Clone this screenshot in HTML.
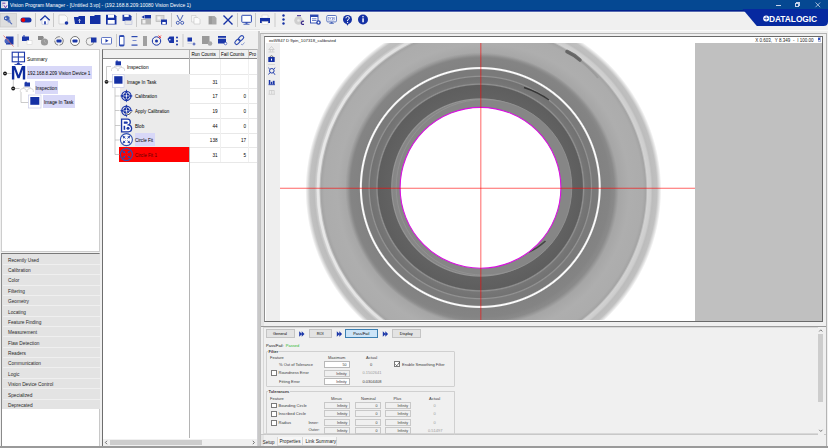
<!DOCTYPE html>
<html><head><meta charset="utf-8">
<style>
*{margin:0;padding:0;box-sizing:border-box}
html,body{width:828px;height:448px;overflow:hidden;background:#f0f0f0;font-family:"Liberation Sans",sans-serif;color:#000}
.a{position:absolute}
.t{position:absolute;white-space:nowrap;line-height:1}
.cat{position:absolute;left:3px;width:96px;height:10px;background:#e3e3e3;border-bottom:0.5px solid #f4f4f4}
.cat span{position:absolute;left:5px;top:4.3px;color:#1a1a1a;font-size:4.75px;white-space:nowrap;line-height:1}
.rc{position:absolute;font-size:4.6px;line-height:1;text-align:right;white-space:nowrap}
.s4{font-size:4px;color:#3a3a3a;margin-top:0.6px}
.inp{position:absolute;height:7px;width:26px;border:0.6px solid #b8b8b8;background:#fff;color:#3a3a3a;font-size:3.6px;text-align:right;padding-right:2px;line-height:6px;white-space:nowrap}
.inp.g{background:#f0f0f0;border-color:#c8c8c8}
.cb{position:absolute;width:5.5px;height:5.5px;border:0.5px solid #7a7a7a;background:#fff}
.btn{position:absolute;top:329px;height:8.5px;background:#e3e3e3;border:0.6px solid #c4c4c4;font-size:3.9px;text-align:center;line-height:7.5px;white-space:nowrap}
</style></head><body>
<div class="a" style="left:0;top:0;width:828px;height:448px;overflow:hidden">

<!-- title bar -->
<svg class="a" style="left:0;top:0" width="828" height="14" viewBox="0 0 828 14"><rect x="0" y="0" width="828" height="10" fill="#054892"/><rect x="0" y="10" width="828" height="1.8" fill="#02208c"/><rect x="0" y="11.8" width="828" height="1" fill="#f6f6f4"/></svg>
<svg class="a" style="left:0;top:0" width="10" height="10" viewBox="0 0 10 10"><rect x="1.1" y="1.2" width="6.9" height="7" fill="#eeeaf0"/><rect x="2.2" y="2.6" width="3.2" height="1.2" fill="#7a5ab8"/><rect x="2.2" y="3.8" width="1" height="3.5" fill="#c8c8d0"/><path d="M4 5.3 L5.5 7.8 L7 5.3" stroke="#6a3ab0" stroke-width="1" fill="none"/></svg>
<div class="t" style="left:10px;top:3px;font-size:5px;color:#fff">Vision Program Manager - [Untitled 3.vp] - (192.168.8.209:10080 Vision Device 1)</div>
<div class="a" style="left:776px;top:4.5px;width:5px;height:0.8px;background:#c8d4ea"></div>
<div class="a" style="left:795px;top:3.3px;width:3.6px;height:3.6px;border:0.7px solid #c8d4ea"></div><div class="a" style="left:796.3px;top:2.2px;width:3.6px;height:3.6px;border-top:0.7px solid #c8d4ea;border-right:0.7px solid #c8d4ea"></div>
<svg class="a" style="left:814px;top:1px" width="8" height="8" viewBox="0 0 8 8"><path d="M1.5 1.5 L6.2 6.2 M6.2 1.5 L1.5 6.2" stroke="#dde5f3" stroke-width="0.7"/></svg>

<!-- datalogic logo -->
<svg class="a" style="left:740px;top:9px" width="88" height="18" viewBox="0 0 88 18">
<path d="M2.5 0 L88 0 L88 12.5 Q88 17 83.5 17 L16.8 17 Z" fill="#0629a0"/>
<circle cx="26.2" cy="9.4" r="3" fill="#fff"/><path d="M26.2 7.4 L26.2 11.4 M24.2 9.4 L28.2 9.4" stroke="#0629a0" stroke-width="0.7"/>
</svg>
<div class="t" style="left:769px;top:14.5px;font-size:8.4px;font-weight:bold;color:#fff;letter-spacing:-0.05px">DATALOGIC</div>
<!-- toolbar 2 line -->
<div class="a" style="left:0;top:29px;width:260px;height:1px;background:#e4e4e4"></div>

<!-- left panel tree -->
<div class="a" style="left:1px;top:49px;width:99px;height:202.5px;background:#fff;border:1px solid #cdcdcd"></div>
<div class="a" style="left:27px;top:66px;width:65px;height:13px;background:#d8d8f8"></div>
<div class="a" style="left:35px;top:81px;width:23px;height:13px;background:#d8d8f8"></div>
<div class="a" style="left:43px;top:95px;width:32px;height:13px;background:#d8d8f8"></div>
<div class="t" style="left:27px;top:57.5px;font-size:4.75px">Summary</div>
<div class="t" style="left:27.5px;top:72px;font-size:4.65px">192.168.8.209 Vision Device 1</div>
<div class="t" style="left:35.5px;top:86.5px;font-size:4.75px">Inspection</div>
<div class="t" style="left:44px;top:101px;font-size:4.75px">Image In Task</div>

<!-- categories -->
<div class="a" style="left:1px;top:252.5px;width:99px;height:194px;background:#fff;border:1px solid #c8c8c8;border-top-color:#787878;border-left-color:#8a8a8a"></div>
<div class="a" style="left:2px;top:253.5px;width:97.5px;height:155px;background:#e3e3e3"></div>
<div class="t" style="left:8px;top:258.70px;font-size:4.75px;color:#2a2a2a">Recently Used</div>
<div class="a" style="left:2.5px;top:263.77px;width:97px;height:1px;background:#efefef"></div>
<div class="t" style="left:8px;top:269.07px;font-size:4.75px;color:#2a2a2a">Calibration</div>
<div class="a" style="left:2.5px;top:274.14px;width:97px;height:1px;background:#efefef"></div>
<div class="t" style="left:8px;top:279.44px;font-size:4.75px;color:#2a2a2a">Color</div>
<div class="a" style="left:2.5px;top:284.51px;width:97px;height:1px;background:#efefef"></div>
<div class="t" style="left:8px;top:289.81px;font-size:4.75px;color:#2a2a2a">Filtering</div>
<div class="a" style="left:2.5px;top:294.88px;width:97px;height:1px;background:#efefef"></div>
<div class="t" style="left:8px;top:300.18px;font-size:4.75px;color:#2a2a2a">Geometry</div>
<div class="a" style="left:2.5px;top:305.25px;width:97px;height:1px;background:#efefef"></div>
<div class="t" style="left:8px;top:310.55px;font-size:4.75px;color:#2a2a2a">Locating</div>
<div class="a" style="left:2.5px;top:315.62px;width:97px;height:1px;background:#efefef"></div>
<div class="t" style="left:8px;top:320.92px;font-size:4.75px;color:#2a2a2a">Feature Finding</div>
<div class="a" style="left:2.5px;top:325.99px;width:97px;height:1px;background:#efefef"></div>
<div class="t" style="left:8px;top:331.29px;font-size:4.75px;color:#2a2a2a">Measurement</div>
<div class="a" style="left:2.5px;top:336.36px;width:97px;height:1px;background:#efefef"></div>
<div class="t" style="left:8px;top:341.66px;font-size:4.75px;color:#2a2a2a">Flaw Detection</div>
<div class="a" style="left:2.5px;top:346.73px;width:97px;height:1px;background:#efefef"></div>
<div class="t" style="left:8px;top:352.03px;font-size:4.75px;color:#2a2a2a">Readers</div>
<div class="a" style="left:2.5px;top:357.10px;width:97px;height:1px;background:#efefef"></div>
<div class="t" style="left:8px;top:362.40px;font-size:4.75px;color:#2a2a2a">Communication</div>
<div class="a" style="left:2.5px;top:367.47px;width:97px;height:1px;background:#efefef"></div>
<div class="t" style="left:8px;top:372.77px;font-size:4.75px;color:#2a2a2a">Logic</div>
<div class="a" style="left:2.5px;top:377.84px;width:97px;height:1px;background:#efefef"></div>
<div class="t" style="left:8px;top:383.14px;font-size:4.75px;color:#2a2a2a">Vision Device Control</div>
<div class="a" style="left:2.5px;top:388.21px;width:97px;height:1px;background:#efefef"></div>
<div class="t" style="left:8px;top:393.51px;font-size:4.75px;color:#2a2a2a">Specialized</div>
<div class="a" style="left:2.5px;top:398.58px;width:97px;height:1px;background:#efefef"></div>
<div class="t" style="left:8px;top:403.88px;font-size:4.75px;color:#2a2a2a">Deprecated</div>
<!-- middle panel -->
<div class="a" style="left:102px;top:49px;width:156px;height:398px;background:#fff;border:1px solid #d0d0d4;border-left-color:#6e6e6e;border-top-color:#b0b0b0"></div>
<div class="a" style="left:103px;top:50px;width:154px;height:8.5px;background:#f0f0f0;border-bottom:1.5px solid #8a8a8a"></div>
<div class="a" style="left:189.3px;top:50px;width:0.8px;height:388px;background:#b4b4b4"></div>
<div class="a" style="left:219.3px;top:50px;width:0.6px;height:8px;background:#c8c8c8"></div>
<div class="a" style="left:247.5px;top:50px;width:0.6px;height:8px;background:#c8c8c8"></div>
<div class="t" style="left:191.5px;top:52.5px;font-size:4.6px">Run Counts</div>
<div class="t" style="left:221px;top:52.5px;font-size:4.6px">Fail Counts</div>
<div class="t" style="left:249px;top:52.5px;font-size:4.6px">Pro</div>
<!-- row bgs -->
<div class="a" style="left:112px;top:73.7px;width:77.5px;height:14.7px;background:#ebebeb"></div>
<div class="a" style="left:119.5px;top:88.4px;width:70px;height:58.8px;background:#ebebeb"></div>
<div class="a" style="left:119.4px;top:147.4px;width:69.6px;height:14.3px;background:#ff0000"></div>
<div class="a" style="left:134.5px;top:132.8px;width:20px;height:13.5px;background:#d8d8f8"></div>
<div class="a" style="left:190px;top:73.7px;width:67px;height:0.5px;background:#e8e8e8"></div>
<div class="a" style="left:190px;top:88.4px;width:67px;height:0.5px;background:#e8e8e8"></div>
<div class="a" style="left:190px;top:103.1px;width:67px;height:0.5px;background:#e8e8e8"></div>
<div class="a" style="left:190px;top:117.8px;width:67px;height:0.5px;background:#e8e8e8"></div>
<div class="a" style="left:190px;top:132.5px;width:67px;height:0.5px;background:#e8e8e8"></div>
<div class="a" style="left:190px;top:147.2px;width:67px;height:0.5px;background:#e8e8e8"></div>
<div class="a" style="left:190px;top:161.9px;width:67px;height:0.5px;background:#e8e8e8"></div>
<div class="a" style="left:219.5px;top:59px;width:0.5px;height:103px;background:#f0f0f0"></div>
<div class="a" style="left:247.5px;top:59px;width:0.5px;height:103px;background:#f0f0f0"></div>
<div class="t" style="left:127px;top:65.5px;font-size:4.75px">Inspection</div>
<div class="t" style="left:127px;top:80.5px;font-size:4.75px">Image In Task</div>
<div class="t" style="left:135px;top:95px;font-size:4.6px">Calibration</div>
<div class="t" style="left:135px;top:109.8px;font-size:4.55px">Apply Calibration</div>
<div class="t" style="left:135px;top:124.5px;font-size:4.6px">Blob</div>
<div class="t" style="left:135px;top:139.2px;font-size:4.6px">Circle Fit</div>
<div class="t" style="left:135px;top:154px;font-size:4.6px;color:#600000">Circle Fit 1</div>
<div class="rc" style="right:610.5px;top:80.5px">31</div>
<div class="rc" style="right:610.5px;top:95px">17</div>
<div class="rc" style="right:610.5px;top:109.8px">19</div>
<div class="rc" style="right:610.5px;top:124.5px">44</div>
<div class="rc" style="right:610.5px;top:139.2px">138</div>
<div class="rc" style="right:610.5px;top:154px">31</div>
<div class="rc" style="right:582px;top:95px">0</div>
<div class="rc" style="right:582px;top:109.8px">0</div>
<div class="rc" style="right:582px;top:124.5px">0</div>
<div class="rc" style="right:582px;top:139.2px">17</div>
<div class="rc" style="right:582px;top:154px">5</div>
<!-- h scrollbar -->
<div class="a" style="left:103px;top:438.5px;width:154px;height:7.5px;background:#f0f0f0"></div>
<div class="a" style="left:109.5px;top:439.5px;width:92px;height:5.5px;background:#cdcdcd"></div>
<svg class="a" style="left:103px;top:439px" width="6" height="7" viewBox="0 0 6 7"><path d="M4 1.8 L2.4 3.5 L4 5.2" stroke="#505050" stroke-width="0.8" fill="none"/></svg>
<svg class="a" style="left:251px;top:439px" width="6" height="7" viewBox="0 0 6 7"><path d="M1.8 1.8 L3.4 3.5 L1.8 5.2" stroke="#505050" stroke-width="0.8" fill="none"/></svg>

<!-- separator -->
<div class="a" style="left:0;top:29.5px;width:828px;height:0.8px;background:#fafafa"></div><div class="a" style="left:258px;top:31px;width:1.5px;height:416px;background:#c8c8c8"></div><div class="a" style="left:259.5px;top:31px;width:0.8px;height:416px;background:#f8f8f8"></div>

<!-- right area -->
<div class="a" style="left:260px;top:33px;width:567px;height:414px;border:1px solid #b4b4b4;border-left-color:#c0c0c0;background:#f0f0f0"></div><div class="a" style="left:261px;top:34px;width:2.7px;height:412px;background:#e4e4e4"></div>
<div class="a" style="left:264px;top:36px;width:559px;height:286px;border:1px solid #6a6a6a;border-left-color:#909090;background:#fff"></div>

<div class="t" style="left:269px;top:38.5px;font-size:4.28px;color:#222">eoW847 D 9pin_107318_calibrated</div>
<div class="t" style="left:755.2px;top:38.6px;font-size:4.5px;color:#222;word-spacing:0.1px">X 0.603, &nbsp;Y 8.349 &nbsp;- &nbsp;I 100.00</div>
<div class="a" style="left:817.5px;top:37.3px;width:3.6px;height:4.6px;background:#e8ecf8;border:0.5px solid #b0b8d8"></div><div class="a" style="left:818.4px;top:38.2px;width:1.8px;height:2.2px;background:#3050c0"></div>
<div class="a" style="left:266px;top:43px;width:14px;height:278px;background:#eeeeee"></div>
<div class="a" style="left:695px;top:43px;width:127px;height:278px;background:#c0c0c0"></div>

<!-- image -->
<svg class="a" style="left:280px;top:43px" width="415" height="277" viewBox="280 43 415 277">
<defs>
<radialGradient id="rgo" gradientUnits="userSpaceOnUse" cx="483.4" cy="190" r="178">
<stop offset="0.685" stop-color="#868686"/>
<stop offset="0.735" stop-color="#8a8a8a"/>
<stop offset="0.76" stop-color="#a6a6a6"/>
<stop offset="0.82" stop-color="#aeaeae"/>
<stop offset="0.895" stop-color="#acacac"/>
<stop offset="0.912" stop-color="#a4a4a4"/>
<stop offset="0.922" stop-color="#d2d2d2"/>
<stop offset="0.94" stop-color="#cdcdcd"/>
<stop offset="0.95" stop-color="#bcbcbc"/>
<stop offset="0.975" stop-color="#c0c0c0"/>
<stop offset="0.993" stop-color="#ececec"/>
<stop offset="1" stop-color="#ffffff"/>
</radialGradient>
<linearGradient id="hl" gradientUnits="userSpaceOnUse" x1="305" y1="0" x2="560" y2="0">
<stop offset="0" stop-color="#fff" stop-opacity="0.55"/>
<stop offset="1" stop-color="#fff" stop-opacity="0"/>
</linearGradient>
<radialGradient id="rgi" gradientUnits="userSpaceOnUse" cx="480.3" cy="187.5" r="135">
<stop offset="0.590" stop-color="#8a8a8a"/>
<stop offset="0.648" stop-color="#868686"/>
<stop offset="0.656" stop-color="#969696"/>
<stop offset="0.664" stop-color="#626262"/>
<stop offset="0.756" stop-color="#5e5e5e"/>
<stop offset="0.765" stop-color="#929292"/>
<stop offset="0.775" stop-color="#767676"/>
<stop offset="0.815" stop-color="#727272"/>
<stop offset="0.823" stop-color="#949494"/>
<stop offset="0.832" stop-color="#7a7a7a"/>
<stop offset="0.873" stop-color="#7a7a7a"/>
<stop offset="0.881" stop-color="#f6f6f6"/>
<stop offset="0.888" stop-color="#ffffff"/>
<stop offset="0.896" stop-color="#828282"/>
<stop offset="0.960" stop-color="#848484"/>
<stop offset="1" stop-color="#8a8a8a" stop-opacity="0"/>
</radialGradient>
</defs>
<rect x="280" y="43" width="415" height="277" fill="#fff"/>
<circle cx="483.4" cy="190" r="178" fill="url(#rgo)"/>
<circle cx="483.4" cy="190" r="165.5" fill="none" stroke="url(#hl)" stroke-width="2.6"/>
<circle cx="480.3" cy="187.5" r="135" fill="url(#rgi)"/>
<circle cx="484" cy="187.3" r="87.8" fill="#868686" stroke="#949494" stroke-width="0.8"/>
<path d="M567 51.5 Q574 54.5 580 60" stroke="#3a3a3a" stroke-width="3.6" fill="none" opacity="0.6" stroke-linecap="round"/>
<path d="M581 61 Q592 70 598 78" stroke="#8a8a8a" stroke-width="2" fill="none" opacity="0.4"/>
<path d="M524 87.5 Q538 92 549 100" stroke="#2a2a2a" stroke-width="1.5" fill="none" opacity="0.85"/>
<path d="M529 252 Q538 248 545.5 241" stroke="#2a2a2a" stroke-width="1.6" fill="none" opacity="0.7"/>
<circle cx="480.5" cy="187.8" r="80.4" fill="#fff" stroke="#d810e0" stroke-width="1.1"/>
<rect x="280" y="187.7" width="415" height="1.2" fill="#ff0000" opacity="0.5"/>
<rect x="480.2" y="43" width="1.2" height="277" fill="#ff0000" opacity="0.5"/>
</svg>
<!-- image side icons -->
<svg class="a" style="left:264px;top:43px" width="16" height="60" viewBox="264 43 16 60">
<path d="M268.8 49.5 L271.5 46.5 L274.2 49.5 Z M270.3 49.5 L270.3 51.5 M272.7 49.5 L272.7 51.5 M268.5 52 L274.5 52" stroke="#c4c4c4" stroke-width="0.7" fill="none"/>
<rect x="268.3" y="57" width="6.4" height="5" fill="#1430a4"/><path d="M269.5 57 Q271.5 54.3 273.5 57" stroke="#555" stroke-width="0.8" fill="none"/>
<rect x="271" y="58.6" width="1" height="2" fill="#fff"/>
<rect x="268" y="64.3" width="7" height="0.6" fill="#c8c8c8"/>
<circle cx="271.8" cy="70.8" r="2.3" fill="none" stroke="#1a36a8" stroke-width="1"/><path d="M273.4 72.5 L275 74.8 M270 72.6 L268.5 74.5 M269.6 68.8 L268.3 67.8 M274 68.8 L275.2 67.8" stroke="#1a36a8" stroke-width="0.9"/>
<path d="M268.5 84.7 L275 84.7" stroke="#1a36a8" stroke-width="0.8"/>
<rect x="268.8" y="80" width="1.5" height="4.5" fill="#1a36a8"/><rect x="270.8" y="81.8" width="1.5" height="2.7" fill="#1a36a8"/><rect x="272.8" y="80.8" width="1.8" height="3.7" fill="#1a36a8"/>
<path d="M268.5 94.3 L275 94.3 M269.3 94 L269.3 90.5 L274.2 90.5 L274.2 94 M271.7 90.5 L271.7 94" stroke="#c0c0c0" stroke-width="0.6" fill="none"/>
</svg>

<!-- bottom panel -->
<div class="a" style="left:261px;top:325.5px;width:565px;height:109px;border-top:0.8px solid #9a9a9a;border-bottom:0.6px solid #c8c8c8;background:#f0f0f0"></div>
<div class="a" style="left:263px;top:327px;width:555px;height:107px;border:0.6px solid #d8d8d8;border-right:none"></div>
<!-- v scrollbar -->
<div class="a" style="left:817.5px;top:327px;width:6px;height:108px;background:#f0f0f0"></div>
<div class="a" style="left:818px;top:333.8px;width:4.8px;height:68.7px;background:#cdcdcd"></div>
<svg class="a" style="left:817px;top:328px" width="8" height="5" viewBox="0 0 8 5"><path d="M2.2 3.5 L3.8 1.8 L5.4 3.5" stroke="#606060" stroke-width="0.8" fill="none"/></svg>
<svg class="a" style="left:817px;top:428px" width="8" height="5" viewBox="0 0 8 5"><path d="M2.2 1.8 L3.8 3.5 L5.4 1.8" stroke="#606060" stroke-width="0.8" fill="none"/></svg>

<div class="btn" style="left:265.5px;width:29px">General</div>
<div class="btn" style="left:309px;width:22.5px">ROI</div>
<div class="btn" style="left:345px;width:32.5px;background:#cce4f7;border-color:#3c7fb1">Pass/Fail</div>
<div class="btn" style="left:391.5px;width:29.5px">Display</div>
<svg class="a" style="left:295px;top:329px" width="100" height="10" viewBox="295 329 100 10">
<path d="M299.2 331.2 L302 334 L299.2 336.8 Z M301.7 331.2 L304.5 334 L301.7 336.8 Z" fill="#1a36a8"/>
<path d="M336.8 331.2 L339.6 334 L336.8 336.8 Z M339.3 331.2 L342.1 334 L339.3 336.8 Z" fill="#1a36a8"/>
<path d="M382.8 331.2 L385.6 334 L382.8 336.8 Z M385.3 331.2 L388.1 334 L385.3 336.8 Z" fill="#1a36a8"/>
</svg>

<div class="t s4" style="left:266px;top:343.5px;color:#111">Pass/Fail: &nbsp;<span style="color:#2ab82a">Passed</span></div>
<!-- filter group -->
<div class="a" style="left:265.5px;top:351px;width:189px;height:36.2px;border:0.6px solid #d0d0d0;border-radius:1px"></div>
<div class="t s4" style="left:268px;top:349.5px;font-weight:bold;background:#f0f0f0;padding:0 0.5px">Filter</div>
<div class="t s4" style="left:270px;top:355.3px">Feature</div>
<div class="t s4" style="left:328px;top:355.3px">Maximum</div>
<div class="t s4" style="left:366px;top:355.3px">Actual</div>
<div class="t s4" style="left:279px;top:362px">% Out of Tolerance</div>
<div class="inp" style="left:323.6px;top:360.5px">50</div>
<div class="t s4" style="left:370px;top:362px">0</div>
<div class="cb" style="left:394px;top:361.2px"></div>
<svg class="a" style="left:394px;top:361px" width="7" height="7" viewBox="0 0 7 7"><path d="M1.3 3.3 L2.8 4.8 L5.6 1.2" stroke="#333" stroke-width="0.7" fill="none"/></svg>
<div class="t s4" style="left:402px;top:362.2px">Enable Smoothing Filter</div>
<div class="cb" style="left:271px;top:370px"></div>
<div class="t s4" style="left:278.5px;top:370.5px">Roundness Error</div>
<div class="inp g" style="left:323.6px;top:369.5px">Infinity</div>
<div class="t s4" style="left:362.5px;top:370.5px;color:#9a9a9a">0.1502641</div>
<div class="t s4" style="left:279px;top:379px">Fitting Error</div>
<div class="inp" style="left:323.6px;top:378px">Infinity</div>
<div class="t s4" style="left:362.5px;top:379px">0.0304408</div>

<!-- tolerances -->
<div class="a" style="left:265.5px;top:391px;width:189px;height:44px;border:0.6px solid #d0d0d0;border-bottom:none;border-radius:1px"></div>
<div class="t s4" style="left:268px;top:389.5px;font-weight:bold;background:#f0f0f0;padding:0 0.5px">Tolerances</div>
<div class="t s4" style="left:270px;top:396px">Feature</div>
<div class="t s4" style="left:331px;top:396px">Minus</div>
<div class="t s4" style="left:361px;top:396px">Nominal</div>
<div class="t s4" style="left:393.5px;top:396px">Plus</div>
<div class="t s4" style="left:429px;top:396px">Actual</div>
<div class="cb" style="left:271px;top:402.5px"></div>
<div class="t s4" style="left:278.5px;top:403.3px">Bounding Circle</div>
<div class="cb" style="left:271px;top:411px"></div>
<div class="t s4" style="left:278.5px;top:411.8px">Inscribed Circle</div>
<div class="cb" style="left:271px;top:420px"></div>
<div class="t s4" style="left:278.5px;top:420.5px">Radius</div>
<div class="t s4" style="left:308.5px;top:420.8px">Inner:</div>
<div class="t s4" style="left:308.5px;top:427.9px">Outer:</div>
<div class="inp g" style="left:324.4px;top:401.5px">Infinity</div>
<div class="inp g" style="left:354.6px;top:401.5px">0</div>
<div class="inp g" style="left:385px;top:401.5px">Infinity</div>
<div class="t s4" style="left:433.5px;top:403.3px;color:#9a9a9a">0</div>
<div class="inp g" style="left:324.4px;top:410px">Infinity</div>
<div class="inp g" style="left:354.6px;top:410px">0</div>
<div class="inp g" style="left:385px;top:410px">Infinity</div>
<div class="t s4" style="left:433.5px;top:411.8px;color:#9a9a9a">0</div>
<div class="inp g" style="left:324.4px;top:419px">Infinity</div>
<div class="inp g" style="left:354.6px;top:419px">0</div>
<div class="inp g" style="left:385px;top:419px">Infinity</div>
<div class="t s4" style="left:433.5px;top:420.5px;color:#9a9a9a">0</div>
<div class="inp g" style="left:324.4px;top:427.2px">Infinity</div>
<div class="inp g" style="left:354.6px;top:427.2px">0</div>
<div class="inp g" style="left:385px;top:427.2px">Infinity</div>
<div class="t s4" style="left:428px;top:428px;color:#9a9a9a">0.51497</div>

<!-- tabs -->

<div class="a" style="left:277.3px;top:436.5px;width:25.5px;height:9.5px;background:#f6f6f6;border:0.6px solid #d8d8d8;border-top:none"></div>
<div class="a" style="left:302.8px;top:436.5px;width:34.2px;height:9.5px;background:#f6f6f6;border:0.6px solid #d8d8d8;border-top:none;border-left:none"></div>
<div class="t" style="left:262.8px;top:440.8px;font-size:4.45px;color:#222">Setup</div>
<div class="t" style="left:279.5px;top:440px;font-size:4.6px;color:#222">Properties</div>
<div class="t" style="left:305.5px;top:440px;font-size:4.8px;color:#222">Link Summary</div>
<div class="a" style="left:0;top:446.3px;width:828px;height:1.7px;background:#9a9a9a"></div>

<svg class="a" style="left:0;top:0" width="828" height="448" viewBox="0 0 828 448">
<!-- toolbar1 separators -->
<g fill="#c9c9c9">
<rect x="35" y="13" width="1" height="14"/><rect x="53" y="13" width="1" height="14"/>
<rect x="136" y="13" width="1" height="14"/><rect x="171" y="13" width="1" height="14"/>
<rect x="237" y="13" width="1" height="14"/><rect x="255" y="13" width="1" height="14"/>
<rect x="274.5" y="13" width="1" height="14"/>
</g>
<!-- pressed button -->
<rect x="0.5" y="13.5" width="16" height="13.5" fill="#dedede" stroke="#cccccc" stroke-width="0.8"/>
<!-- key icon -->
<g fill="#3f5fb5">
<path d="M4 17 L7 15.5 L9.5 17 L9.5 19.5 L7 21 L4 19.5 Z"/>
<circle cx="9" cy="21" r="1.6" fill="#6c84c8"/>
<path d="M10 21.5 L12.5 24 L11.5 24.5 L9.5 22.5 Z" fill="#4a66b8"/>
</g>
<circle cx="5.8" cy="18.2" r="0.8" fill="#fff"/>
<!-- toggle -->
<rect x="20.5" y="17.5" width="11" height="5" rx="2.5" fill="#1430a4"/>
<circle cx="23.2" cy="20" r="2.1" fill="#ee0000"/>
<!-- home -->
<path d="M40.3 20.3 L45 15.8 L49.7 20.3" fill="none" stroke="#1430a4" stroke-width="1.3"/>
<path d="M42 20 L45 17.5 L48 20 L48 24.3 L42 24.3 Z" fill="#fff" stroke="#9aa6d6" stroke-width="0.5"/>
<rect x="44.2" y="21.3" width="1.6" height="3" fill="#1430a4"/>
<!-- new doc -->
<path d="M59 15 L65 15 L67.5 17.5 L67.5 24 L59 24 Z" fill="#fafafa" stroke="#c8c8c8" stroke-width="0.7"/>
<circle cx="66.5" cy="23" r="1.8" fill="#1a36a8"/>
<!-- open folder -->
<path d="M74 17 L78 17 L79 16 L85 16 L85 24 L75 24 L74 18 Z" fill="#1430a4"/>
<path d="M79.5 23 L79.5 19.5 M78.5 20.5 L79.5 19.3 L80.5 20.5" stroke="#fff" stroke-width="0.7" fill="none"/>
<!-- folder -->
<path d="M90 16 L94 16 L95 15 L100.5 15 L100.5 24 L90 24 Z" fill="#1430a4"/>
<!-- save -->
<path d="M106 14.7 L115 14.7 L116.5 16.2 L116.5 24.5 L106 24.5 Z" fill="#1430a4"/>
<rect x="108" y="14.7" width="6" height="3" fill="#fff"/>
<rect x="107.7" y="20" width="7" height="3.8" fill="#fff"/>
<!-- save as -->
<path d="M122.5 14.7 L130 14.7 L131.5 16.2 L131.5 21 L122.5 21 Z" fill="#1e3aa8"/>
<rect x="124.2" y="14.7" width="4.5" height="2.2" fill="#fff"/>
<rect x="125" y="20" width="7" height="4.5" fill="#e8e8e8" stroke="#a8b0d8" stroke-width="0.5"/>
<rect x="124" y="19" width="7" height="1.5" fill="#1e3aa8"/>
<!-- export icons grey -->
<rect x="141" y="19" width="10" height="5.5" fill="#b8b8b8"/>
<rect x="142.5" y="20" width="3" height="3.5" fill="#f0f0f0"/>
<path d="M141.5 17 L144 15.5 L144 18.5 Z" fill="#1430a4"/>
<rect x="144.5" y="15" width="6.5" height="3.5" fill="#1430a4"/>
<rect x="156" y="15.5" width="8" height="6" fill="#d8d8d8" stroke="#b0b0b0" stroke-width="0.6"/>
<rect x="157.5" y="16.5" width="3" height="3" fill="#f4f4f4"/>
<rect x="161" y="19.5" width="6" height="5" fill="#1a36a8"/>
<rect x="162.3" y="22" width="3.4" height="2" fill="#fff"/>
<!-- scissors -->
<path d="M177 15 L180 21 M183 15 L180 21" stroke="#3450b0" stroke-width="0.9" fill="none"/>
<circle cx="177.8" cy="22.8" r="1.5" fill="none" stroke="#3450b0" stroke-width="0.9"/>
<circle cx="182.2" cy="22.8" r="1.5" fill="none" stroke="#3450b0" stroke-width="0.9"/>
<!-- copy -->
<path d="M191.5 15.5 L196 15.5 L196 22 L191.5 22 Z" fill="#f6f6f6" stroke="#c8c8c8" stroke-width="0.6"/>
<path d="M194 17.5 L198 17.5 L200 19.5 L200 24 L194 24 Z" fill="#fbfbfb" stroke="#c4c4c4" stroke-width="0.6"/>
<!-- paste grey -->
<path d="M208.5 16 L214.5 16 L216.5 18 L216.5 24.5 L208.5 24.5 Z" fill="#a8a8a8"/>
<rect x="209" y="16.5" width="3" height="7.5" fill="#9a9a9a"/>
<!-- X -->
<path d="M223.5 15.5 L232.5 24.5 M232.5 15.5 L223.5 24.5" stroke="#1430a4" stroke-width="1.4"/>
<!-- monitor -->
<rect x="241.8" y="15.3" width="9.6" height="7" rx="0.6" fill="#fff" stroke="#2a48b0" stroke-width="1"/>
<rect x="245.5" y="22.3" width="2" height="1.5" fill="#2a48b0"/>
<rect x="243.5" y="23.8" width="6" height="0.8" fill="#2a48b0"/>
<!-- printer -->
<rect x="262" y="15" width="6" height="3" fill="#fff" stroke="#c8c8ce" stroke-width="0.5"/>
<path d="M260 18 L270 18 L270 23 L260 23 Z" fill="#1430a4"/>
<rect x="262" y="21.5" width="6" height="3" fill="#fff" stroke="#c8c8ce" stroke-width="0.5"/>
<!-- vertical dots -->
<circle cx="283.5" cy="15.5" r="1.2" fill="#1430a4"/><circle cx="283.5" cy="19.5" r="1.2" fill="#1430a4"/><circle cx="283.5" cy="23.5" r="1.2" fill="#1430a4"/>
<!-- grey disc C -->
<circle cx="298.5" cy="20.5" r="4.3" fill="#cfcfcf"/>
<circle cx="298.5" cy="20.5" r="1.3" fill="#eaeaea"/>
<rect x="297" y="15" width="4" height="1.2" fill="#5a4aa0"/>
<path d="M304 21.3 Q302 20.8 301.3 22.8 Q301.3 24.8 304 24.4" stroke="#3a2a8a" stroke-width="1.2" fill="none"/>
<!-- doc gear -->
<rect x="310.5" y="15" width="7.5" height="8" fill="#fff" stroke="#2a48b0" stroke-width="0.9"/>
<rect x="310.5" y="15" width="7.5" height="2" fill="#2a48b0"/>
<rect x="312" y="18.5" width="4.5" height="0.7" fill="#2a48b0"/><rect x="312" y="20.2" width="4.5" height="0.7" fill="#2a48b0"/>
<circle cx="318.5" cy="22.5" r="2.3" fill="#2a48b0"/><circle cx="318.5" cy="22.5" r="0.9" fill="#fff"/>
<!-- monitor arrows -->
<rect x="326.8" y="15.5" width="9.6" height="6.4" rx="1" fill="#fff" stroke="#4a66b8" stroke-width="0.9"/>
<rect x="328.6" y="17.3" width="6" height="2.8" fill="#fff" stroke="#6a80c8" stroke-width="0.5"/>
<path d="M329.5 18.7 L331 18.7 M332 17.9 L333.5 18.7 L332 19.5" stroke="#2a48b0" stroke-width="0.6" fill="none"/>
<rect x="330.6" y="22" width="2" height="1.4" fill="#4a66b8"/><rect x="329.3" y="23.2" width="4.6" height="0.7" fill="#4a66b8"/>
<!-- ? -->
<circle cx="347.5" cy="19.5" r="4.5" fill="#1430a4"/>
<path d="M346.2 23.5 L347.5 25.8 L348.8 23.5 Z" fill="#1430a4"/>
<path d="M345.9 18.3 Q345.9 16.5 347.6 16.5 Q349.3 16.5 349.3 18.1 Q349.3 19.2 347.6 19.9 L347.6 21" stroke="#fff" stroke-width="1" fill="none"/>
<circle cx="347.6" cy="22.4" r="0.6" fill="#fff"/>
<!-- i -->
<circle cx="363" cy="19.5" r="5" fill="#1430a4"/>
<rect x="362.3" y="18.3" width="1.5" height="4" fill="#fff"/><circle cx="363" cy="16.8" r="0.8" fill="#fff"/>
</svg>

<svg class="a" style="left:0;top:0" width="828" height="60" viewBox="0 0 828 60">
<g fill="#c9c9c9">
<rect x="17.5" y="34" width="1" height="13"/><rect x="116" y="34" width="1" height="13"/><rect x="182.5" y="34" width="1" height="13"/>
</g>
<!-- crossed -->
<rect x="6" y="36.5" width="7.5" height="8" fill="#1a36a8"/>
<circle cx="7" cy="41" r="2.5" fill="#4a66c0"/>
<path d="M3.5 35.5 L13.5 46.5" stroke="#e06a6a" stroke-width="0.8"/>
<!-- cam doc -->
<rect x="22" y="36.5" width="7" height="4.5" fill="#1a36a8"/>
<rect x="23" y="35.5" width="2" height="1" fill="#1a36a8"/>
<rect x="27" y="40.5" width="5" height="4" fill="#fff" stroke="#d0d0d0" stroke-width="0.5"/>
<!-- grey -->
<path d="M38 36 L43 36 L44 38 L42 40 L38 40 Z" fill="#8a8a8a"/>
<circle cx="44.5" cy="42" r="3.6" fill="#9a9a9a"/>
<path d="M44.5 40 L44.5 42 L46 43" stroke="#bdbdbd" stroke-width="0.5" fill="none"/>
<!-- circle arrows -->
<circle cx="59" cy="41" r="4.3" fill="none" stroke="#555" stroke-width="0.7" stroke-dasharray="6 1.5"/>
<rect x="56.5" y="39.5" width="5" height="3" rx="0.8" fill="#1a36a8"/>
<!-- circle cam -->
<circle cx="75" cy="41" r="4.5" fill="#fff" stroke="#555" stroke-width="0.8"/>
<rect x="72.5" y="39.5" width="5" height="3" rx="0.8" fill="#1a36a8"/>
<!-- circle with square -->
<circle cx="90" cy="41.5" r="3.8" fill="none" stroke="#777" stroke-width="0.7"/>
<rect x="91" y="37.5" width="5.5" height="5" fill="#1a36a8"/>
<!-- monitor play -->
<rect x="101.5" y="37.5" width="10" height="6.5" rx="0.8" fill="#fff" stroke="#3a56b8" stroke-width="0.8"/>
<path d="M105.5 39 L108.5 40.8 L105.5 42.5 Z" fill="#1a36a8"/>
<!-- phone -->
<rect x="119.5" y="35.5" width="4.5" height="10.5" rx="0.8" fill="#fff" stroke="#2a48b0" stroke-width="0.9"/>
<rect x="119.5" y="35.5" width="4.5" height="1.5" fill="#2a48b0"/><rect x="119.5" y="44.5" width="4.5" height="1.5" fill="#2a48b0"/>
<!-- list -->
<rect x="131.5" y="36" width="6" height="1.2" fill="#2a48b0"/><rect x="131.5" y="44.5" width="6" height="1.2" fill="#2a48b0"/>
<rect x="132.5" y="40" width="4" height="0.9" fill="#6a80c8"/>
<!-- grey bar -->
<rect x="143" y="36" width="4" height="10" fill="#a0a0a0"/>
<!-- target -->
<circle cx="156.5" cy="41" r="4.2" fill="none" stroke="#1a36a8" stroke-width="1"/>
<circle cx="156.5" cy="41" r="1.5" fill="#1a36a8"/>
<path d="M158.5 35.5 L161 38 M161 35.5 L158.5 38" stroke="#ee2020" stroke-width="0.8"/>
<!-- blue doc dots -->
<path d="M167.5 39 L169.5 36.5 L174 36.5 L174 43 L169.5 43 Z" fill="#1a36a8"/>
<circle cx="169.8" cy="39.8" r="0.8" fill="#fff"/>
<circle cx="177" cy="37.5" r="1" fill="#1a36a8"/><circle cx="177" cy="41" r="1" fill="#1a36a8"/><circle cx="177" cy="44.5" r="1" fill="#1a36a8"/>
<!-- square + -->
<rect x="187.5" y="37.5" width="4.5" height="4" fill="#1a36a8"/>
<path d="M187.5 43.5 L192 43.5" stroke="#b0b8d8" stroke-width="0.5"/>
<path d="M194 42.5 L194 45.5 M192.5 44 L195.5 44" stroke="#1a36a8" stroke-width="0.8"/>
<!-- grey square -->
<rect x="202" y="36" width="7.5" height="8" fill="#9a9a9a"/>
<circle cx="210" cy="43.5" r="2.3" fill="#a8a8a8"/>
<!-- blue doc -->
<rect x="218" y="36" width="8" height="7.5" fill="#1a36a8"/>
<rect x="218" y="37.8" width="8" height="0.9" fill="#f0f0f0"/>
<circle cx="225.5" cy="43.5" r="1.3" fill="#fff" stroke="#1a36a8" stroke-width="0.6"/>
<!-- link -->
<g fill="none" stroke="#2a48b0" stroke-width="1.1">
<rect x="234.5" y="40" width="6" height="3.6" rx="1.8" transform="rotate(-45 237.5 41.8)"/>
<rect x="238" y="36.5" width="6" height="3.6" rx="1.8" transform="rotate(-45 241 38.3)"/>
</g>
<path d="M241 44 L242.3 45 L244.5 42.5" stroke="#4a66c0" stroke-width="0.6" fill="none"/>
</svg>

<svg class="a" style="left:0;top:0" width="260" height="170" viewBox="0 0 260 170">
<defs>
<g id="net"><path d="M0.5 7.5 L0.5 6 Q0.5 4 3.5 4 Q6.5 4 6.5 6 L6.5 7.5 M7.5 7.5 L7.5 6 Q7.5 4 10.5 4 Q13.5 4 13.5 6 L13.5 7.5 M3.5 4 L3.5 2.8 L10.5 2.8 L10.5 4" fill="none" stroke="#cfcfcf" stroke-width="0.8"/></g>
<g id="xh"><circle cx="0" cy="0" r="4.7" fill="none" stroke="#1a36a8" stroke-width="1.1"/><circle cx="0" cy="0" r="3" fill="#0e2a9e"/>
<path d="M-3.2 0 L3.2 0 M0 -3.2 L0 3.2" stroke="#fff" stroke-width="0.7"/><circle cx="0" cy="0" r="0.6" fill="#fff"/>
<path d="M-6.6 0 L-3 -1.3 L-3 1.3 Z M6.6 0 L3 -1.3 L3 1.3 Z M0 -6.6 L-1.3 -3 L1.3 -3 Z M0 6.6 L-1.3 3 L1.3 3 Z" fill="#1a36a8"/></g>
<g id="cf"><circle cx="0" cy="0" r="6" fill="none" stroke="#3050b0" stroke-width="1.1"/>
<path d="M1 1 L2.6 2.6 M-1 1 L-2.6 2.6 M1 -1 L2.6 -2.6 M-1 -1 L-2.6 -2.6" stroke="#3a58b8" stroke-width="1"/>
<path d="M4.1 4.1 L0.9 2.9 L2.9 0.9 Z M-4.1 4.1 L-0.9 2.9 L-2.9 0.9 Z M4.1 -4.1 L0.9 -2.9 L2.9 -0.9 Z M-4.1 -4.1 L-0.9 -2.9 L-2.9 -0.9 Z" fill="#2a48b0"/>
</g>
<g id="exp"><circle cx="0" cy="0" r="1.9" fill="#111"/><rect x="-1.1" y="-0.3" width="2.2" height="0.6" fill="#ccc"/></g>
</defs>
<!-- left tree -->
<g fill="none" stroke="#b4b4b4" stroke-width="0.7">
<path d="M6.5 73.5 L11.5 73.5"/><path d="M13.3 79.5 L13.3 86.8"/><path d="M14.5 88.5 L19.5 88.5"/><path d="M21 92 L21 102.5 L28.5 102.5"/>
</g>
<!-- summary icon -->
<rect x="12.2" y="52.2" width="12.3" height="9.6" fill="none" stroke="#1a36a8" stroke-width="1.1"/>
<path d="M18.35 52.2 L18.35 61.8 M12.2 57 L24.5 57" stroke="#1a36a8" stroke-width="1"/>
<path d="M16 64.5 L18.35 62 L20.7 64.5 Z" fill="#1a36a8"/><rect x="14.5" y="64" width="7.7" height="0.8" fill="#1a36a8"/>
<path d="M11.9 79.4 L11.9 65.9 L15.2 65.9 L18.55 75 L21.9 65.9 L25.2 65.9 L25.2 79.4 L22.8 79.4 L22.8 69.6 L19.6 78.2 L17.5 78.2 L14.3 69.6 L14.3 79.4 Z" fill="#0e2c9e"/>
<use href="#exp" x="5" y="73.5"/>
<use href="#exp" x="13.2" y="88.5"/>
<use href="#net" x="19.8" y="84.5"/>
<rect x="24.5" y="82.5" width="5.5" height="4" fill="#1a36a8"/><rect x="25" y="81.8" width="2" height="1" fill="#1a36a8"/>
<rect x="28.5" y="95" width="12.5" height="13" fill="#fff" stroke="#c8cce8" stroke-width="0.7"/>
<rect x="30.3" y="97" width="9" height="7.8" fill="#1430a4"/>

<!-- middle tree -->
<g fill="none" stroke="#b4b4b4" stroke-width="0.7">
<path d="M106.5 80 L106.5 66.5 L111 66.5"/><path d="M108 81.8 L112.5 81.8"/>
<path d="M115 88 L115 154.5"/>
<path d="M115 96 L119.5 96 M115 110.5 L119.5 110.5 M115 125.5 L120.5 125.5 M115 140 L119.5 140 M115 154.5 L119.5 154.5"/>
</g>
<use href="#net" x="111" y="63.5"/>
<rect x="115.5" y="61.3" width="5.5" height="4" fill="#1a36a8"/><rect x="116" y="60.6" width="2" height="1" fill="#1a36a8"/>
<use href="#exp" x="106.5" y="81.8"/>
<rect x="112.5" y="74.5" width="11.5" height="13" fill="#fff" stroke="#c8cce8" stroke-width="0.7"/>
<rect x="114.2" y="76.2" width="8.3" height="7.5" fill="#1430a4"/>
<use href="#xh" x="126.4" y="95.9"/>
<use href="#xh" x="126.4" y="110.8"/>
<path d="M126.8 113.3 L128.4 115 L131.8 111.6" stroke="#fff" stroke-width="2.2" fill="none"/><path d="M126.8 113.3 L128.4 115 L131.8 111.6" stroke="#111" stroke-width="0.9" fill="none"/>
<!-- blob -->
<path d="M121.6 119.2 L127.6 119.2 Q130.3 119.2 130.3 122.2 Q130.3 124.2 128.6 124.9 Q131.6 125.6 131.6 128.6 Q131.6 131.8 128.2 131.8 L121.6 131.8 Z" fill="#fff" stroke="#1a36a8" stroke-width="1.3"/>
<path d="M123.8 121.5 L126.8 121.5 Q127.8 121.5 127.8 122.6 Q127.8 123.8 126.8 123.8 L123.8 123.8 Z" fill="#1a36a8"/>
<rect x="123.6" y="125.8" width="1.6" height="4" fill="#1a36a8"/><circle cx="128" cy="128.2" r="1.5" fill="#1a36a8"/>
<circle cx="126.4" cy="139.6" r="5.8" fill="#fafafa"/><use href="#cf" x="126.4" y="139.6"/>
<use href="#cf" x="126.4" y="154.5"/>
</svg>

</div>
</body></html>
